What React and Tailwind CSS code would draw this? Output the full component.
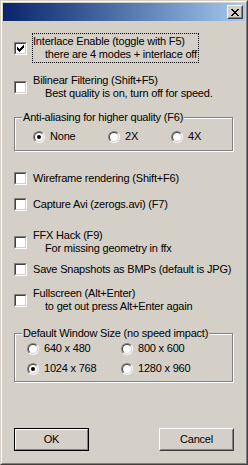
import React from "react";

const face = "bg-[#d4d0c8]";

function CheckBox({ checked }) {
  return (
    <div className="w-[13px] h-[13px] shrink-0 border border-t-[#808080] border-l-[#808080] border-b-white border-r-white">
      <div className="w-full h-full border border-t-[#404040] border-l-[#404040] border-b-[#d4d0c8] border-r-[#d4d0c8] bg-white flex items-center justify-center">
        {checked && (
          <svg width="7" height="7" viewBox="0 0 7 7" shapeRendering="crispEdges">
            <rect x="6" y="0" width="1" height="1" fill="#000" />
            <rect x="5" y="1" width="2" height="1" fill="#000" />
            <rect x="0" y="2" width="1" height="1" fill="#000" />
            <rect x="4" y="2" width="3" height="1" fill="#000" />
            <rect x="0" y="3" width="2" height="1" fill="#000" />
            <rect x="3" y="3" width="3" height="1" fill="#000" />
            <rect x="0" y="4" width="5" height="1" fill="#000" />
            <rect x="1" y="5" width="3" height="1" fill="#000" />
            <rect x="2" y="6" width="1" height="1" fill="#000" />
          </svg>
        )}
      </div>
    </div>
  );
}

function Radio({ checked }) {
  return (
    <div className="w-[12px] h-[12px] shrink-0 rounded-full border border-t-[#808080] border-l-[#808080] border-b-white border-r-white">
      <div className="w-full h-full rounded-full border border-t-[#404040] border-l-[#404040] border-b-[#d4d0c8] border-r-[#d4d0c8] bg-white flex items-center justify-center">
        {checked && <div className="w-[4px] h-[4px] rounded-full bg-black" />}
      </div>
    </div>
  );
}

function CheckRow({ checked, focused, text, sub, className }) {
  return (
    <div className={`flex items-center ${className}`}>
      <CheckBox checked={checked} />
      <div
        className={`ml-[5px] border py-[1px] pr-[1px] ${
          focused ? "border-dotted border-black" : "border-transparent"
        }`}
      >
        <div>{text}</div>
        {sub && <div className="pl-[12px]">{sub}</div>}
      </div>
    </div>
  );
}

function RadioOpt({ checked, label, className }) {
  return (
    <div className={`flex items-center h-[13px] ${className}`}>
      <Radio checked={checked} />
      <span className="ml-[5px]">{label}</span>
    </div>
  );
}

function Group({ title, className, children }) {
  return (
    <div
      className={`relative w-[219px] border border-[#808080] shadow-[inset_1px_1px_0_#fff,1px_1px_0_#fff] ${className}`}
    >
      <span className={`absolute left-[7px] top-[-7px] px-[1px] ${face}`}>{title}</span>
      {children}
    </div>
  );
}

export default function App() {
  return (
    <div
      className="w-[248px] h-[465px] border border-t-[#d4d0c8] border-l-[#d4d0c8] border-b-[#404040] border-r-[#404040] bg-[#d4d0c8] text-black text-[11px] leading-[13px] tracking-[-0.2px]"
      style={{ fontFamily: '"Liberation Sans", Arial, sans-serif' }}
    >
      <div className="h-full border border-t-white border-l-white border-b-[#808080] border-r-[#808080] p-[1px] flex flex-col">
        <div className="h-[18px] shrink-0 bg-gradient-to-r from-[#0a246a] to-[#a6caf0] flex items-center justify-end pr-[2px]">
          <div className="w-[16px] h-[14px] border border-t-white border-l-white border-b-[#404040] border-r-[#404040]">
            <div className="w-full h-full border border-t-[#d4d0c8] border-l-[#d4d0c8] border-b-[#808080] border-r-[#808080] bg-[#d4d0c8] flex items-center justify-center">
              <svg width="8" height="7" viewBox="0 0 8 7" shapeRendering="crispEdges">
                <rect x="0" y="0" width="2" height="1" fill="#000" />
                <rect x="6" y="0" width="2" height="1" fill="#000" />
                <rect x="1" y="1" width="2" height="1" fill="#000" />
                <rect x="5" y="1" width="2" height="1" fill="#000" />
                <rect x="2" y="2" width="4" height="1" fill="#000" />
                <rect x="3" y="3" width="2" height="1" fill="#000" />
                <rect x="2" y="4" width="4" height="1" fill="#000" />
                <rect x="1" y="5" width="2" height="1" fill="#000" />
                <rect x="5" y="5" width="2" height="1" fill="#000" />
                <rect x="0" y="6" width="2" height="1" fill="#000" />
                <rect x="6" y="6" width="2" height="1" fill="#000" />
              </svg>
            </div>
          </div>
        </div>

        <div className="flex flex-col pl-[11px]">
          <CheckRow
            className="mt-[12px]"
            checked
            focused
            text="Interlace Enable (toggle with F5)"
            sub="there are 4 modes + interlace off"
          />
          <CheckRow
            className="mt-[9px]"
            text="Bilinear Filtering (Shift+F5)"
            sub="Best quality is on, turn off for speed."
          />

          <Group title="Anti-aliasing for higher quality (F6)" className="mt-[15px] h-[34px] pt-[12px]">
            <div className="flex pl-[18px]">
              <RadioOpt checked label="None" className="w-[75px]" />
              <RadioOpt label="2X" className="w-[63px]" />
              <RadioOpt label="4X" />
            </div>
          </Group>

          <CheckRow className="mt-[19px]" text="Wireframe rendering (Shift+F6)" />
          <CheckRow className="mt-[9px]" text="Capture Avi (zerogs.avi) (F7)" />
          <CheckRow
            className="mt-[14px]"
            text="FFX Hack (F9)"
            sub="For missing geometry in ffx"
          />
          <CheckRow className="mt-[4px]" text="Save Snapshots as BMPs (default is JPG)" />
          <CheckRow
            className="mt-[7px]"
            text="Fullscreen (Alt+Enter)"
            sub="to get out press Alt+Enter again"
          />

          <Group title="Default Window Size (no speed impact)" className="mt-[18px] h-[49px] pt-[8px]">
            <div className="grid grid-cols-[94px_1fr] gap-y-[7px] pl-[12px]">
              <RadioOpt label="640 x 480" />
              <RadioOpt label="800 x 600" />
              <RadioOpt checked label="1024 x 768" />
              <RadioOpt label="1280 x 960" />
            </div>
          </Group>

          <div className="mt-[46px] w-[220px] flex justify-between">
            <button className="w-[75px] h-[23px] border border-black">
              <div className="w-full h-full border border-t-white border-l-white border-b-[#808080] border-r-[#808080] flex items-center justify-center">
                OK
              </div>
            </button>
            <button className="w-[75px] h-[23px] border border-t-white border-l-white border-b-[#404040] border-r-[#404040]">
              <div className="w-full h-full border border-t-[#d4d0c8] border-l-[#d4d0c8] border-b-[#808080] border-r-[#808080] flex items-center justify-center">
                Cancel
              </div>
            </button>
          </div>
        </div>
      </div>
    </div>
  );
}
